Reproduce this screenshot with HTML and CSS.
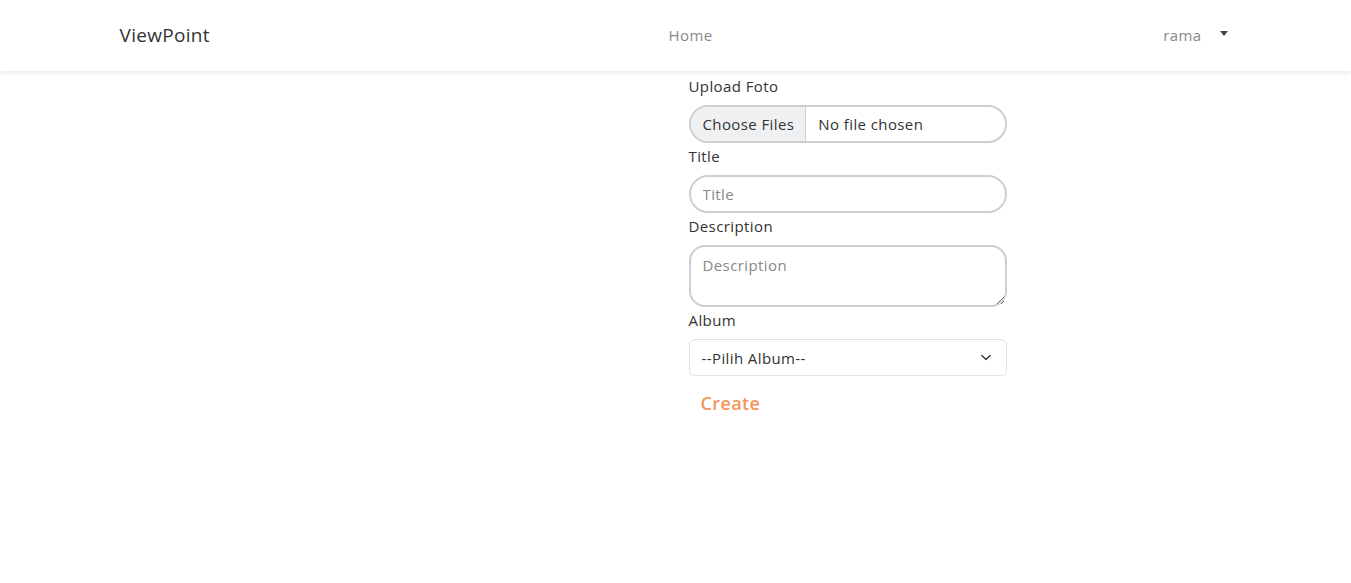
FILE: index.html
```html
<!DOCTYPE html>
<html lang="id">
<head>
<meta charset="utf-8">
<title>ViewPoint</title>
<link rel="stylesheet" href="styles.css">
</head>
<body>
<nav class="navbar">
  <div class="container nav-inner">
    <a class="brand" href="#">ViewPoint</a>
    <a class="nav-link" href="#">Home</a>
    <div class="user">
      <span class="user-name">rama</span>
      <span class="caret"></span>
    </div>
  </div>
</nav>
<main class="container main">
  <div class="spacer"></div>
  <form class="form">
    <label class="label" for="foto">Upload Foto</label>
    <input class="control file" id="foto" type="file" multiple>
    <label class="label" for="title">Title</label>
    <input class="control" id="title" type="text" placeholder="Title">
    <label class="label" for="desc">Description</label>
    <textarea class="control area" id="desc" placeholder="Description"></textarea>
    <label class="label" for="album">Album</label>
    <select class="select" id="album">
      <option>--Pilih Album--</option>
    </select>
    <button class="create" type="button">Create</button>
  </form>
</main>
</body>
</html>
```
FILE: styles.css
```css
* { box-sizing: border-box; }
html, body { margin: 0; padding: 0; }
body {
  font-family: "Open Sans", "Liberation Sans", sans-serif;
  font-size: 15px;
  letter-spacing: 0.4px;
  color: #333;
  background: #fff;
}
.container {
  width: 1140px;
  margin: 0 auto;
  padding: 0 12px;
}
.navbar {
  height: 71px;
  background: #fff;
  box-shadow: 0 1px 6px rgba(0,0,0,0.12);
  position: relative;
}
.nav-inner {
  display: flex;
  align-items: center;
  height: 71px;
  padding-left: 14px;
  padding-bottom: 2px;
}
.brand {
  font-size: 19px;
  letter-spacing: 0.3px;
  color: #333;
  text-decoration: none;
  width: 549px;
}
.nav-link {
  color: #888;
  text-decoration: none;
  font-size: 15px;
  flex: 1;
}
.user {
  display: flex;
  align-items: center;
  color: #888;
  font-size: 15px;
  padding-right: 6px;
}
.caret {
  display: inline-block;
  margin-left: 18px;
  border-top: 5px solid #444;
  border-left: 4px solid transparent;
  border-right: 4px solid transparent;
  margin-bottom: 3px;
}
.main {
  display: flex;
  padding-top: 2px;
}
.spacer { width: 571px; flex: none; }
.form {
  width: 318px;
  display: flex;
  flex-direction: column;
}
.label {
  font-size: 15px;
  color: #333;
  line-height: 22px;
  margin-top: 2px;
  margin-bottom: 8px;
}
.control {
  font-family: inherit;
  font-size: 15px;
  letter-spacing: 0.4px;
  color: #333;
  height: 38px;
  border: 2px solid #cfcfcf;
  border-radius: 19px;
  padding: 0 12px;
  background: #fff;
  outline: none;
}
.control::placeholder { color: #888; }
.file {
  padding: 0;
  overflow: hidden;
  line-height: 34px;
}
.file::file-selector-button {
  font-family: inherit;
  font-size: 15px;
  letter-spacing: 0.4px;
  color: #333;
  height: 34px;
  margin: 0 12px 0 0;
  padding: 0 11px 0 12px;
  border: 0;
  border-right: 1px solid #cfcfcf;
  background: #eef0f2;
}
.area {
  height: 62px;
  border-radius: 16px;
  padding-top: 8px;
  resize: vertical;
}
.select {
  font-family: inherit;
  font-size: 15px;
  letter-spacing: 0.4px;
  color: #333;
  height: 37px;
  border: 1px solid #dee2e6;
  border-radius: 6px;
  padding: 0 36px 0 12px;
  background: #fff url("data:image/svg+xml,%3csvg xmlns='http://www.w3.org/2000/svg' viewBox='0 0 16 16'%3e%3cpath fill='none' stroke='%23343a40' stroke-linecap='round' stroke-linejoin='round' stroke-width='2' d='m2 5 6 6 6-6'/%3e%3c/svg%3e") no-repeat right 13px center / 14px 11px;
  appearance: none;
  -webkit-appearance: none;
}
.create {
  align-self: flex-start;
  font-family: inherit;
  font-size: 18px;
  letter-spacing: 0.4px;
  font-weight: 600;
  color: #f4955b;
  background: none;
  border: 0;
  padding: 6px 12px;
  margin-top: 9px;
  cursor: pointer;
}
```
